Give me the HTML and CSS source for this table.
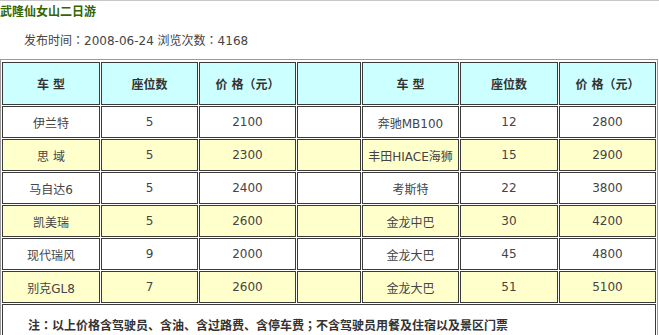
FILE: index.html
```html
<!DOCTYPE html>
<html lang="zh-CN">
<head>
<meta charset="utf-8">
<title>武隆仙女山二日游</title>
<link rel="stylesheet" href="styles.css">
</head>
<body>
<div class="page">
  <h1 class="title">武隆仙女山二日游</h1>
  <p class="meta">发布时间<span class="p" lang="zh-TW">：</span>2008-06-24 浏览次数<span class="p" lang="zh-TW">：</span>4168</p>
  <table class="price">
    <colgroup>
      <col class="c1"><col class="c2"><col class="c3"><col class="c4"><col class="c5"><col class="c6"><col class="c7">
    </colgroup>
    <tr class="head">
      <th>车 型</th><th>座位数</th><th>价 格（元）</th><th></th><th>车 型</th><th>座位数</th><th>价 格（元）</th>
    </tr>
    <tr><td>伊兰特</td><td>5</td><td>2100</td><td></td><td>奔驰MB100</td><td>12</td><td>2800</td></tr>
    <tr class="alt"><td>思 域</td><td>5</td><td>2300</td><td></td><td>丰田HIACE海狮</td><td>15</td><td>2900</td></tr>
    <tr><td>马自达6</td><td>5</td><td>2400</td><td></td><td>考斯特</td><td>22</td><td>3800</td></tr>
    <tr class="alt"><td>凯美瑞</td><td>5</td><td>2600</td><td></td><td>金龙中巴</td><td>30</td><td>4200</td></tr>
    <tr><td>现代瑞风</td><td>9</td><td>2000</td><td></td><td>金龙大巴</td><td>45</td><td>4800</td></tr>
    <tr class="alt"><td>别克GL8</td><td>7</td><td>2600</td><td></td><td>金龙大巴</td><td>51</td><td>5100</td></tr>
    <tr class="note"><td colspan="7">注<span class="p" lang="zh-TW">：</span>以上价格含驾驶员、含油、含过路费、含停车费<span class="p" lang="zh-TW">；</span>不含驾驶员用餐及住宿以及景区门票</td></tr>
  </table>
</div>
</body>
</html>
```

FILE: styles.css
```css
html, body {
  margin: 0;
  padding: 0;
  background: #fff;
}
body {
  font-family: "DejaVu Sans", Verdana, "Noto Sans CJK SC", sans-serif;
  font-size: 12px;
  color: #333;
}
.p {
  font-family: "Noto Sans CJK TC", "Noto Sans CJK JP", sans-serif;
  font-feature-settings: "locl" 0;
}
.page {
  border-top: 1px solid #c8c8c8;
}
.title {
  margin: 0;
  padding: 3px 0 0 0;
  font-size: 12px;
  line-height: 14px;
  font-weight: bold;
  color: #336600;
  font-family: "Noto Sans CJK SC", sans-serif;
}
.meta {
  margin: 0;
  padding: 15px 0 0 24px;
  line-height: 14px;
  color: #444;
}
.price {
  margin-top: 11px;
  width: 658px;
  table-layout: fixed;
  border: 1px solid #9a9a9a;
  border-spacing: 1px;
  border-collapse: separate;
  padding: 1px 0 0 0;
}
.c1 { width: 98px; }
.c2 { width: 97px; }
.c3 { width: 97px; }
.c4 { width: 64px; }
.c5 { width: 97px; }
.c6 { width: 98px; }
.c7 { width: 97px; }
.price th, .price td {
  border: 1px solid #3a3a3a;
  text-align: center;
  padding: 0;
  box-sizing: border-box;
}
.price th {
  height: 43px;
  background: #ccffff;
  font-weight: bold;
  color: #333;
}
.price td {
  height: 32px;
  color: #444;
}
.price tr.alt td {
  background: #ffffcc;
}
.price tr.note td {
  height: 40px;
  text-align: left;
  padding: 0 0 0 25px;
  font-weight: bold;
  color: #333;
  background: #fff;
}
```
